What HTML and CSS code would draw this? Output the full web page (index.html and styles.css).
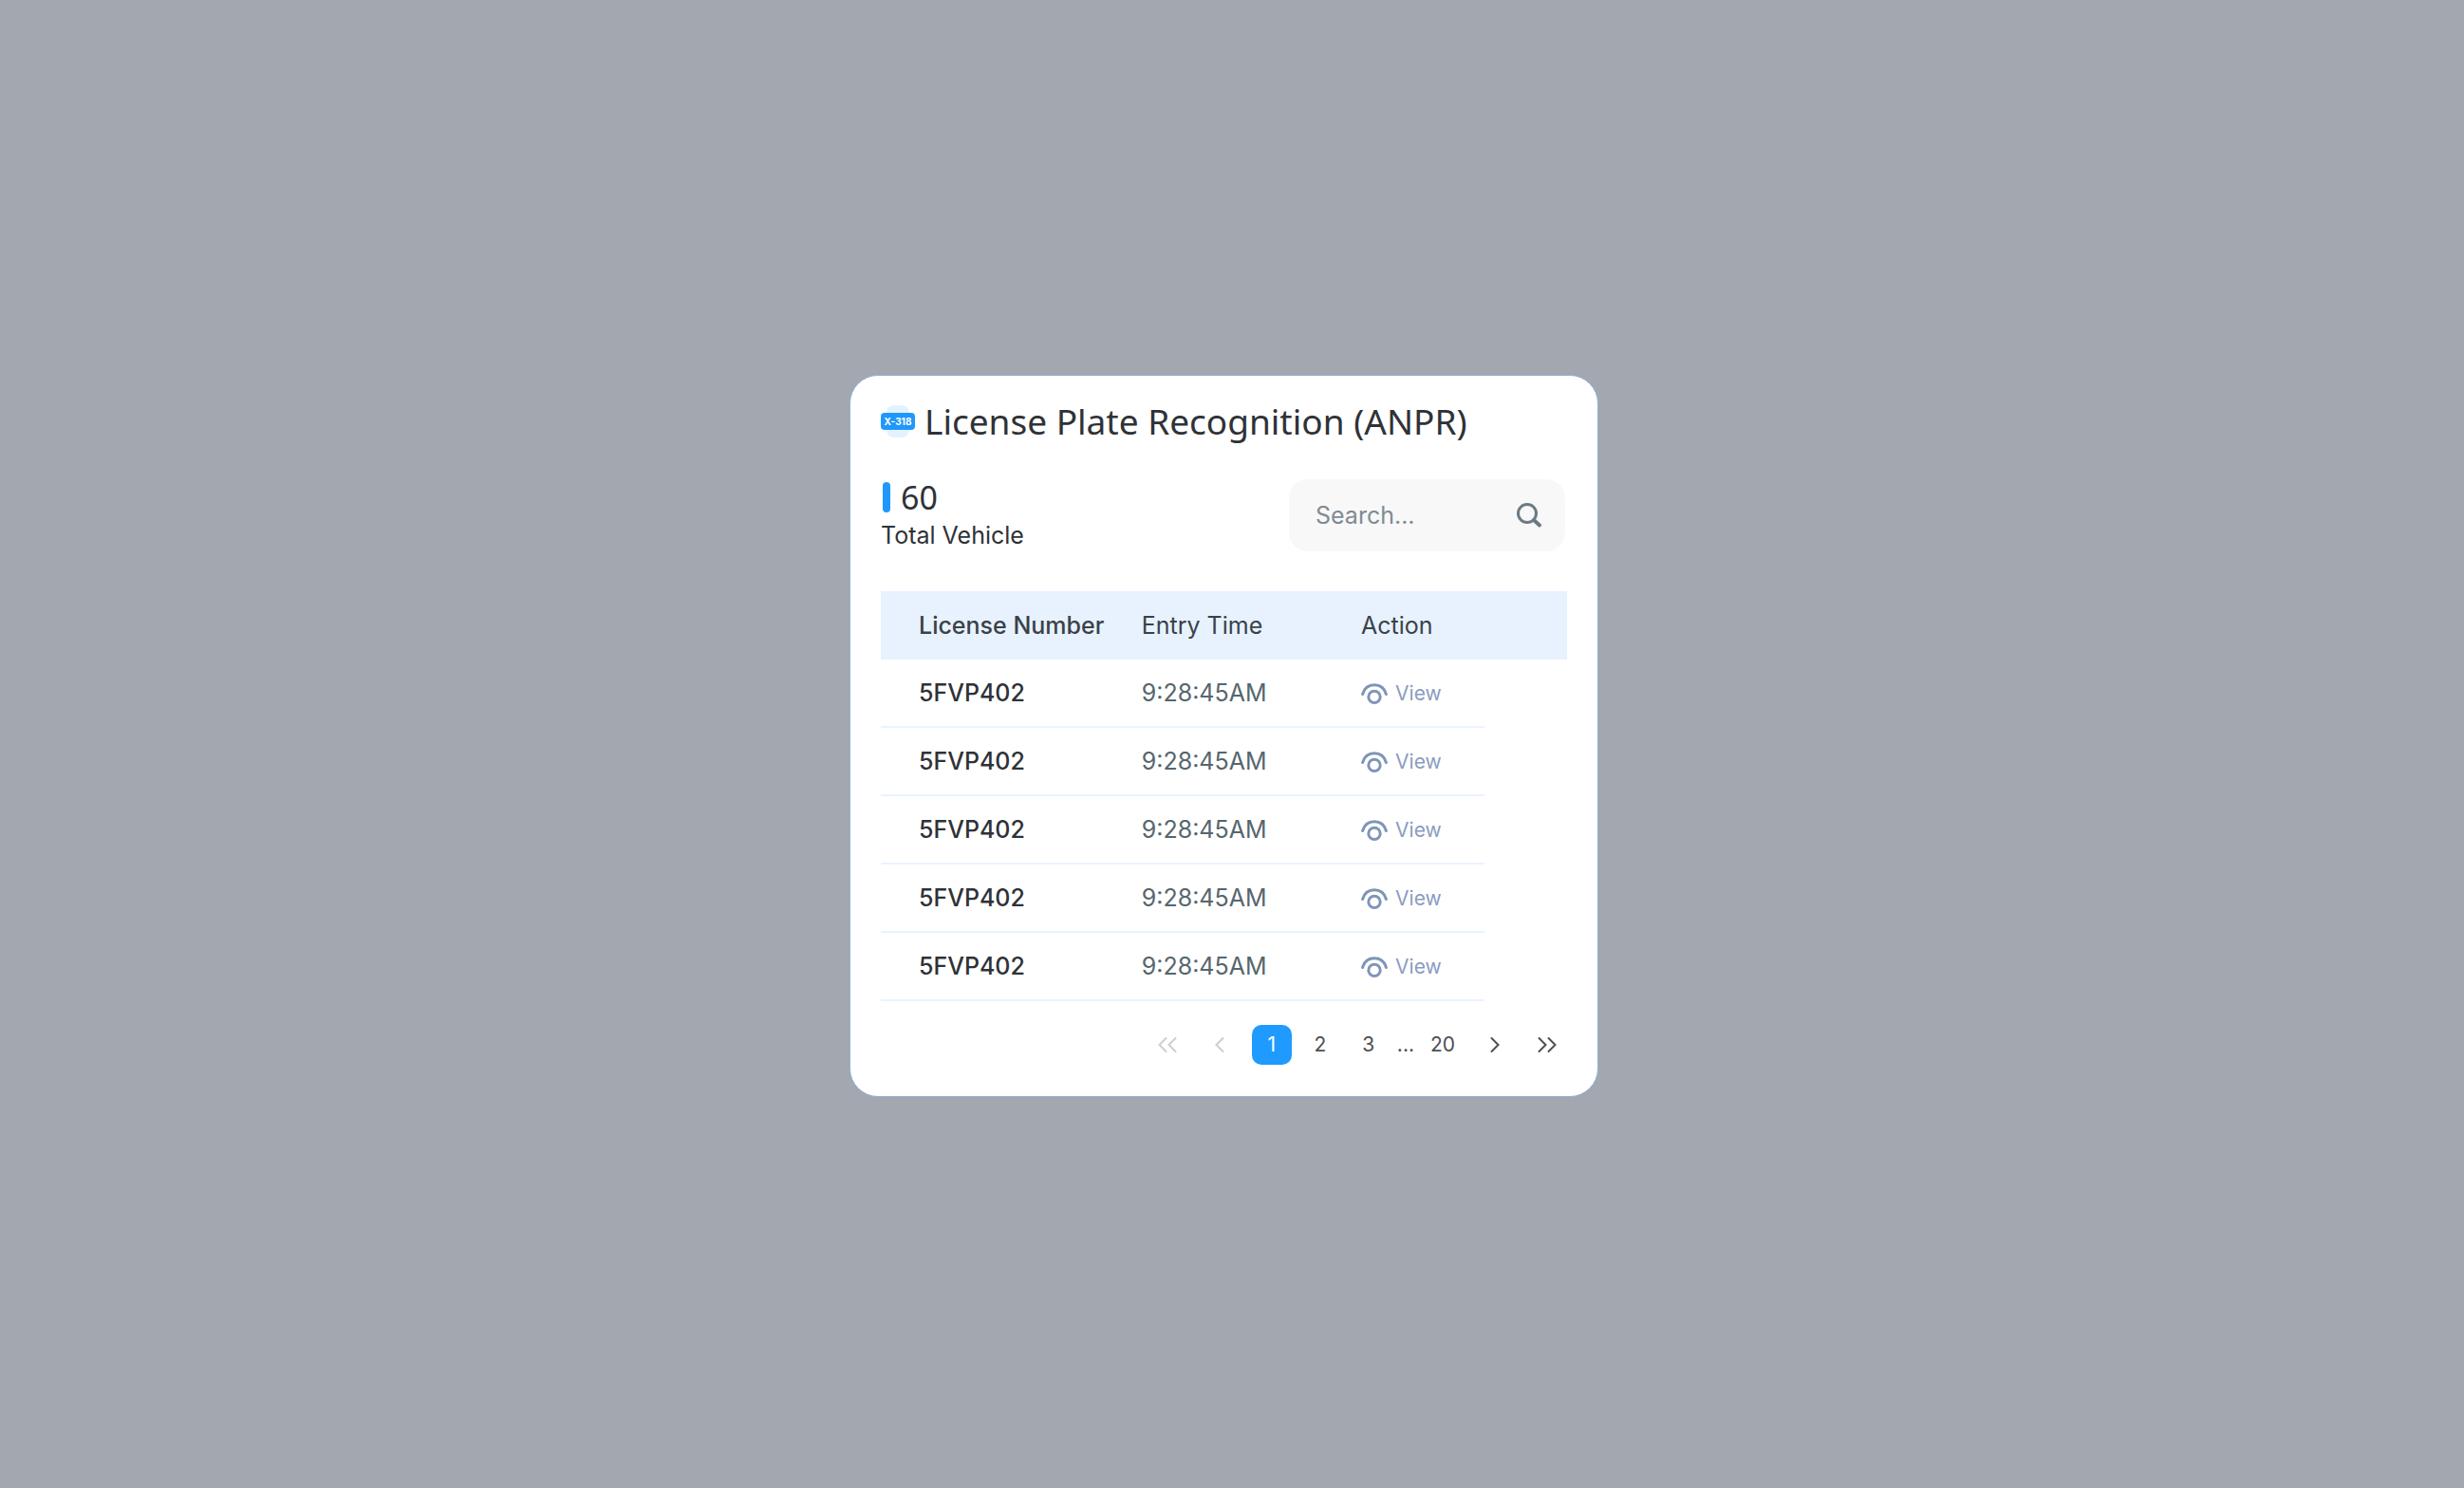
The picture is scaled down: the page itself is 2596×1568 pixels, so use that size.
FILE: index.html
```
<!DOCTYPE html>
<html lang="en">
<head>
    <meta charset="UTF-8">
    <meta name="viewport" content="width=device-width, initial-scale=1.0">
    <title>License Plate Recognition</title>
    <link rel="stylesheet" href="styles.css">
</head>
<body>
    <svg class="sprite" aria-hidden="true">
        <symbol id="eye" viewBox="0 0 28 24">
            <path d="M1.600 12.500C3.400 6.200 8 2.800 14 2.800s10.600 3.400 12.400 9.700" />
            <circle cx="14" cy="15.400" r="6.200" />
        </symbol>
    </svg>
    <main class="card">
        <header class="card-header">
            <svg class="plate-icon" viewBox="0 0 36 34" aria-hidden="true">
                <rect x="6" y="0" width="24" height="34" rx="8" fill="#e3f2ff" />
                <rect x="0" y="8" width="36" height="18" rx="4" fill="#1f98fb" />
                <text x="18" y="21" text-anchor="middle">X-318</text>
            </svg>
            <h1>License Plate Recognition (ANPR)</h1>
        </header>

        <section class="summary">
            <div class="total">
                <div class="total-count"><span class="bar"></span>60</div>
                <div class="total-label">Total Vehicle</div>
            </div>
            <form class="search">
                <input type="search" placeholder="Search..." aria-label="Search">
                <button type="button" aria-label="Submit search">
                    <svg viewBox="0 0 28 28" width="28" height="28">
                        <circle cx="12" cy="12" r="9.500" />
                        <path d="M19 19l6 5.500" stroke-width="4" />
                    </svg>
                </button>
            </form>
        </section>

        <table class="plates">
            <thead>
                <tr>
                    <th class="col-number">License Number</th>
                    <th class="col-time">Entry Time</th>
                    <th class="col-action">Action</th>
                    <th class="col-end"></th>
                </tr>
            </thead>
            <tbody>
                <tr>
                    <td class="number">5FVP402</td>
                    <td>9:28:45AM</td>
                    <td><a href="#" class="view"><svg><use href="#eye" /></svg>View</a></td>
                </tr>
                <tr>
                    <td class="number">5FVP402</td>
                    <td>9:28:45AM</td>
                    <td><a href="#" class="view"><svg><use href="#eye" /></svg>View</a></td>
                </tr>
                <tr>
                    <td class="number">5FVP402</td>
                    <td>9:28:45AM</td>
                    <td><a href="#" class="view"><svg><use href="#eye" /></svg>View</a></td>
                </tr>
                <tr>
                    <td class="number">5FVP402</td>
                    <td>9:28:45AM</td>
                    <td><a href="#" class="view"><svg><use href="#eye" /></svg>View</a></td>
                </tr>
                <tr>
                    <td class="number">5FVP402</td>
                    <td>9:28:45AM</td>
                    <td><a href="#" class="view"><svg><use href="#eye" /></svg>View</a></td>
                </tr>
            </tbody>
        </table>

        <nav class="pagination" aria-label="Pages">
            <button disabled aria-label="First page"><svg viewBox="0 0 22 18" width="22" height="18"><path d="M9.500 2l-7 7 7 7M19.500 2l-7 7 7 7" /></svg></button>
            <button disabled aria-label="Previous page"><svg viewBox="0 0 12 18" width="12" height="18"><path d="M9.500 2l-7 7 7 7" /></svg></button>
            <div class="pages">
                <button class="active" aria-current="page">1</button>
                <button>2</button>
                <button>3</button>
                <span>...</span>
                <button>20</button>
            </div>
            <button aria-label="Next page"><svg viewBox="0 0 12 18" width="12" height="18"><path d="M2.500 2l7 7-7 7" /></svg></button>
            <button aria-label="Last page"><svg viewBox="0 0 22 18" width="22" height="18"><path d="M2.500 2l7 7-7 7M12.500 2l7 7-7 7" /></svg></button>
        </nav>
    </main>
</body>
</html>
```
FILE: styles.css
```
* {
    box-sizing: border-box;
}

body {
    display: flex;
    justify-content: center;
    align-items: center;
    min-height: 100vh;
    margin: 0;
    padding: 0 17px 18px 0;
    background-color: #a2a7b0;
    font-family: Inter, sans-serif;
    font-size: 25px;
    color: #2f3237;
}

button,
input {
    font-family: inherit;
    color: inherit;
    border: none;
    background: none;
    padding: 0;
}

button {
    cursor: pointer;
}

.sprite {
    display: none;
}

.card {
    width: 100%;
    max-width: 789px;
    padding: 24px 32px 33px;
    background-color: white;
    border: 1px solid #8fb1d8;
    border-radius: 30px;
}

.card-header {
    display: flex;
    align-items: center;
    gap: 10px;
    margin-bottom: 37px;
}

.card-header h1 {
    margin: 0;
    font-family: "Noto Sans", sans-serif;
    font-size: 37px;
    font-weight: 400;
    line-height: 48px;
}

.plate-icon {
    width: 36px;
    height: 34px;
}

.plate-icon text {
    font-size: 10px;
    font-weight: 700;
    fill: white;
}

.summary {
    display: flex;
    justify-content: space-between;
    align-items: flex-start;
    margin-bottom: 38px;
    padding-right: 2px;
}

.total-count {
    display: flex;
    align-items: center;
    gap: 11px;
    font-family: "Noto Sans", sans-serif;
    font-size: 34px;
    line-height: 38px;
}

.bar {
    width: 8px;
    height: 32px;
    margin-left: 2px;
    border-radius: 4px;
    background-color: #1f98fb;
}

.total-label {
    line-height: 42px;
}

.search {
    display: flex;
    align-items: center;
    width: 291px;
    height: 76px;
    padding: 0 24px 0 28px;
    border-radius: 20px;
    background-color: #f8f8f8;
}

.search input {
    flex: 1;
    min-width: 0;
    font-size: 25px;
    outline: none;
}

.search input::placeholder {
    color: #7f8b93;
    opacity: 1;
}

.search button {
    display: flex;
}

.search svg {
    fill: none;
    stroke: #6b7a83;
    stroke-width: 3;
    stroke-linecap: round;
}

.plates {
    width: 100%;
    table-layout: fixed;
    border-collapse: separate;
    border-spacing: 0;
}

.plates th,
.plates td {
    height: 72px;
    padding: 0;
    text-align: left;
}

.plates th {
    background-color: #e7f2fe;
    font-weight: 400;
    color: #3b4148;
}

.plates td {
    border-bottom: 2px solid #eaf3fe;
    color: #56666e;
}

.plates th:first-child,
.plates td:first-child {
    padding-left: 40px;
    font-weight: 500;
}

.plates td.number {
    color: #2f3237;
}

.col-number {
    width: 38%;
}

.col-time {
    width: 32%;
}

.col-action {
    width: 18%;
}

.col-end {
    width: 12%;
}

.view {
    display: flex;
    align-items: center;
    gap: 8px;
    padding-top: 2px;
    font-size: 21px;
    color: #8b9cbf;
    text-decoration: none;
}

.view svg {
    width: 28px;
    height: 24px;
    fill: none;
    stroke: #7f95b8;
    stroke-width: 3;
    stroke-linecap: round;
}

.pagination {
    display: flex;
    justify-content: flex-end;
    align-items: center;
    gap: 13px;
    margin-top: 25px;
    color: #4c4f53;
}

.pages {
    display: flex;
    align-items: center;
    gap: 9px;
    font-size: 21px;
}

.pagination button {
    display: flex;
    justify-content: center;
    align-items: center;
    width: 42px;
    height: 42px;
    border-radius: 10px;
    font-size: 21px;
}

.pagination button:disabled {
    color: #cdced0;
    cursor: default;
}

.pagination .active {
    background-color: #1f9bff;
    color: white;
}

.pagination svg {
    fill: none;
    stroke: currentColor;
    stroke-width: 2;
    stroke-linecap: round;
}
```
